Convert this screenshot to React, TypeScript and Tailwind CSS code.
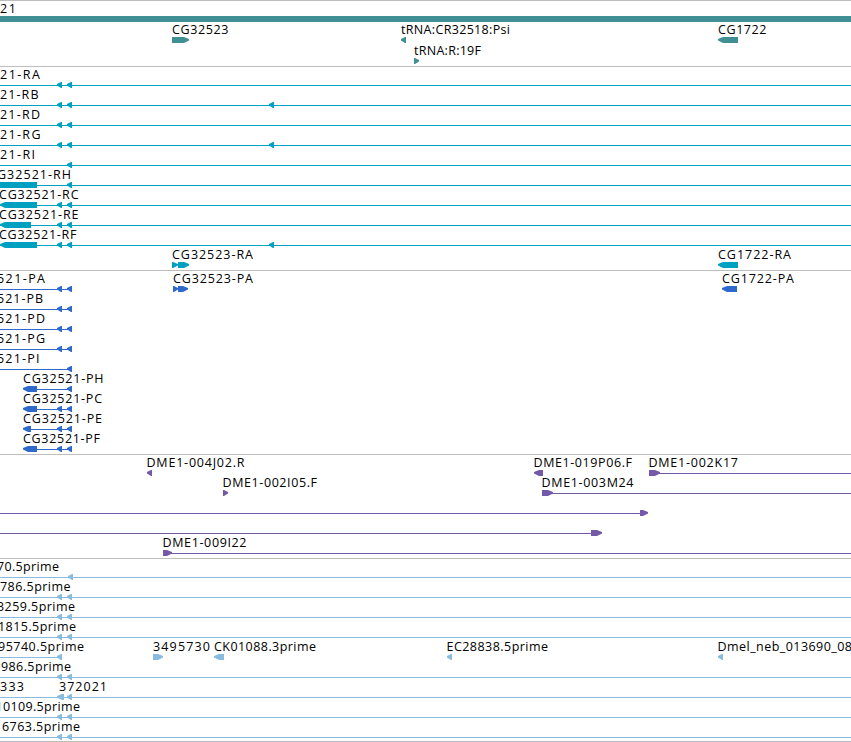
import React from 'react';

type Dir = 'left' | 'right' | 'none';

interface Label {
    text: string;
    x: number;
    width: number;
}

interface Feature {
    start: number;
    end: number;
    dir: Dir;
}

interface Row {
    labels?: Label[];
    lines?: [number, number][];
    features?: Feature[];
}

interface Track {
    name: string;
    color: string;
    className: string;
    rowClass: string;
    rows: Row[];
}

const VIEW_WIDTH = 851;

const label = (text: string, x: number, end: number): Label => ({ text, x, width: end - x });
const left = (start: number, end = start + 5): Feature => ({ start, end, dir: 'left' });
const right = (start: number, end = start + 5): Feature => ({ start, end, dir: 'right' });
const block = (start: number, end: number): Feature => ({ start, end, dir: 'none' });

const full: [number, number][] = [[0, VIEW_WIDTH]];
const pair = [left(57), left(67)];

const tracks: Track[] = [
    {
        name: 'genes',
        color: '#3f8f94',
        className: 'pt-0.5',
        rowClass: 'h-[21px]',
        rows: [
            { labels: [label('21', 0, 16)], features: [block(0, VIEW_WIDTH)] },
            {
                labels: [label('CG32523', 172, 228.5), label('tRNA:CR32518:Psi', 401, 510), label('CG1722', 718, 766.5)],
                features: [right(172, 189), left(401), left(718, 738)],
            },
            { labels: [label('tRNA:R:19F', 414, 481)], features: [right(414)] },
        ],
    },
    {
        name: 'transcripts',
        color: '#00a0c0',
        className: 'pt-0.5 pb-px',
        rowClass: 'h-5',
        rows: [
            { labels: [label('21-RA', 0, 40)], lines: full, features: pair },
            { labels: [label('21-RB', 0, 38.5)], lines: full, features: [...pair, left(269)] },
            { labels: [label('21-RD', 0, 40)], lines: full, features: pair },
            { labels: [label('21-RG', 0, 40.5)], lines: full, features: [...pair, left(269)] },
            { labels: [label('21-RI', 0, 35)], lines: full, features: [left(67)] },
            { labels: [label('G32521-RH', -3, 71)], lines: full, features: [block(0, 37), left(67)] },
            { labels: [label('CG32521-RC', -1, 78.5)], lines: full, features: [left(0, 37), ...pair] },
            { labels: [label('CG32521-RE', -1, 78.5)], lines: full, features: [left(0, 31), ...pair] },
            { labels: [label('CG32521-RF', -1, 76.5)], lines: full, features: [left(0, 37), ...pair, left(269)] },
            {
                labels: [label('CG32523-RA', 172, 253), label('CG1722-RA', 718, 791)],
                features: [right(172, 178), right(178, 189), left(718, 738)],
            },
        ],
    },
    {
        name: 'proteins',
        color: '#3069cc',
        className: 'pt-0.5 pb-px',
        rowClass: 'h-5',
        rows: [
            {
                labels: [label('521-PA', -3, 45), label('CG32523-PA', 173, 253), label('CG1722-PA', 722, 794)],
                lines: [[0, 72]],
                features: [...pair, right(173, 178), right(178, 188), left(722, 737)],
            },
            { labels: [label('521-PB', -3, 43)], lines: [[0, 72]], features: pair },
            { labels: [label('521-PD', -3, 45)], lines: [[0, 72]], features: pair },
            { labels: [label('521-PG', -3, 45)], lines: [[0, 72]], features: pair },
            { labels: [label('521-PI', -3, 39.5)], lines: [[0, 72]], features: [left(67)] },
            { labels: [label('CG32521-PH', 23, 103.5)], lines: [[30, 72]], features: [left(23, 37), left(67)] },
            { labels: [label('CG32521-PC', 23, 102)], lines: [[30, 72]], features: [left(23, 37), ...pair] },
            { labels: [label('CG32521-PE', 23, 102)], lines: [[30, 72]], features: [left(23, 31), ...pair] },
            { labels: [label('CG32521-PF', 23, 100)], lines: [[30, 72]], features: [left(23, 37), ...pair] },
        ],
    },
    {
        name: 'clones',
        color: '#7459a8',
        className: 'pt-0.5 pb-px',
        rowClass: 'h-5',
        rows: [
            {
                labels: [label('DME1-004J02.R', 146.5, 244.5), label('DME1-019P06.F', 533.5, 632), label('DME1-002K17', 648.5, 738)],
                lines: [[655, VIEW_WIDTH]],
                features: [left(147), left(534, 543), right(649, 660)],
            },
            {
                labels: [label('DME1-002I05.F', 222.5, 317), label('DME1-003M24', 541.5, 633.5)],
                lines: [[548, VIEW_WIDTH]],
                features: [right(223), right(542, 553)],
            },
            { lines: [[0, 643]], features: [right(640, 648)] },
            { lines: [[0, 596]], features: [right(591, 602)] },
            { labels: [label('DME1-009I22', 162.5, 246.5)], lines: [[167, VIEW_WIDTH]], features: [right(163, 172)] },
        ],
    },
    {
        name: 'ests',
        color: '#88bbdd',
        className: 'pt-0.5 border-b',
        rowClass: 'h-5',
        rows: [
            { labels: [label('70.5prime', -3, 59)], lines: full, features: [left(68)] },
            { labels: [label('786.5prime', 0, 70.5)], lines: full, features: pair },
            { labels: [label('3259.5prime', -3, 75)], lines: full, features: pair },
            { labels: [label('1815.5prime', -2, 76)], lines: full, features: pair },
            {
                labels: [
                    label('95740.5prime', -2, 84),
                    label('3495730', 153, 210),
                    label('CK01088.3prime', 214, 316),
                    label('EC28838.5prime', 446.5, 548),
                    label('Dmel_neb_013690_08', 717.5, 852),
                ],
                lines: [[0, 60]],
                features: [left(57), right(153, 163), left(214, 224), left(447), left(718)],
            },
            { labels: [label('986.5prime', 1, 71)], lines: full, features: pair },
            { labels: [label('333', 0, 24), label('372021', 59, 107)], lines: full, features: [left(57, 64), left(67)] },
            { labels: [label('10109.5prime', -4.5, 80)], lines: full, features: pair },
            { labels: [label('6763.5prime', 2, 80)], lines: full, features: pair },
        ],
    },
];

function featurePoints({ start, end, dir }: Feature) {
    if (dir === 'none') return `${start},13 ${end},13 ${end},19 ${start},19`;
    // only the last few pixels taper
    const tip = Math.min(5, end - start - 1);
    if (dir === 'left') {
        return `${start},15 ${start + tip},13 ${end},13 ${end},19 ${start + tip},19 ${start},16.6`;
    }
    return `${end},15 ${end - tip},13 ${start},13 ${start},19 ${end - tip},19 ${end},16.6`;
}

function TrackRow({ row, className }: { row: Row; className: string }) {
    return (
        <div className={className}>
            <svg className="block h-full w-full overflow-visible">
                {row.lines?.map(([from, to]) => (
                    <rect key={from} x={from} y={16} width={to - from} height={1} fill="currentColor" />
                ))}
                {row.features?.map((feature) => (
                    <polygon key={feature.start} points={featurePoints(feature)} fill="currentColor" />
                ))}
                {row.labels?.map((item) => (
                    <text
                        key={item.text}
                        x={item.x}
                        y={10}
                        textLength={item.width}
                        className="fill-black text-[12.5px]"
                    >
                        {item.text}
                    </text>
                ))}
            </svg>
        </div>
    );
}

export default function App() {
    return (
        <main className="w-[851px] h-[742px] overflow-hidden bg-white font-['Open_Sans','DejaVu_Sans',sans-serif]">
            {tracks.map((track) => (
                <section
                    key={track.name}
                    className={`border-t border-[#bdbdbd] ${track.className}`}
                    style={{ color: track.color }}
                >
                    {track.rows.map((row, i) => (
                        <TrackRow key={i} row={row} className={track.rowClass} />
                    ))}
                </section>
            ))}
        </main>
    );
}
